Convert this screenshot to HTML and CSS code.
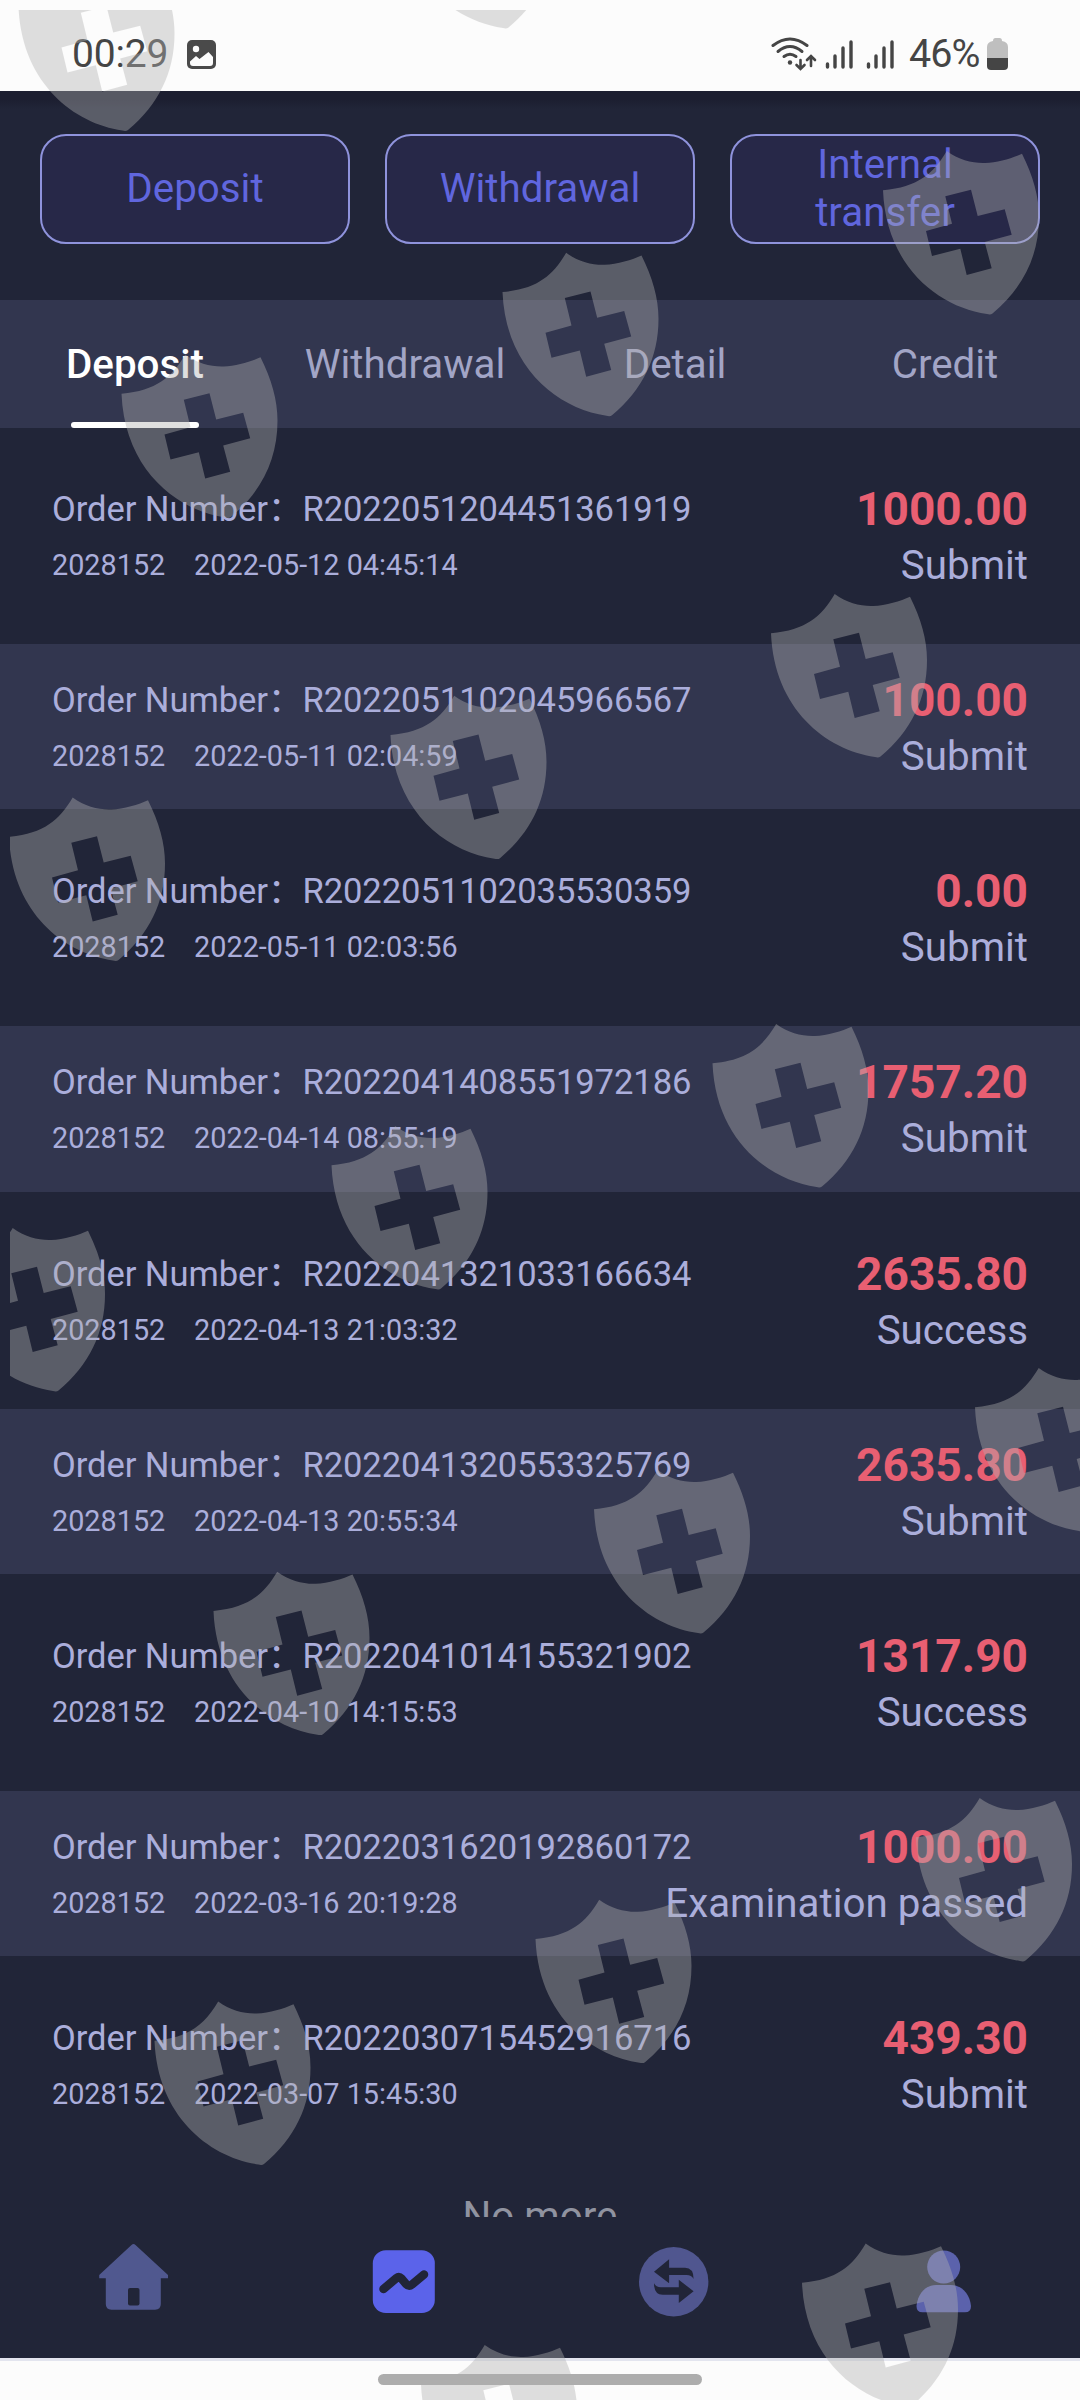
FILE: index.html
```html
<!DOCTYPE html>
<html lang="en">
<head>
    <meta charset="UTF-8">
    <meta name="viewport" content="width=device-width, initial-scale=1.0">
    <title>Deposit records</title>
    <link rel="stylesheet" href="styles.css">
</head>
<body>

<!-- Status bar -->
<div class="status-bar">
    <span class="clock">00:29</span>
    <svg class="photo-icon" viewBox="0 0 29 29">
        <rect width="29" height="29" rx="5" fill="#4a4a4a"/>
        <circle cx="9" cy="9" r="3.2" fill="#fcfcfc"/>
        <path d="M3 21.500L9 16l3.500 3L21.500 12 26 17v6q0 3-3 3H6q-3 0-3-3z" fill="#fcfcfc"/>
    </svg>
    <svg class="signal-icons" viewBox="0 0 124 34">
        <g fill="none" stroke="#454545" stroke-width="3" stroke-linecap="round">
            <path d="M2 8.500Q19 -4.500 36 8.500"/>
            <path d="M7 14.500Q19 4.500 31 14.500"/>
            <path d="M13 19.500Q19 15 25 19.500"/>
            <path d="M29.500 23v8M25.500 28l4 4 4-4M40 29v-9M36 23l4-4 4 4" stroke-width="2.600"/>
            <path d="M56.500 27v3M64 19v11M72 11v19M80 5v25M97.500 27v3M105 19v11M113 11v19M121 5v25" stroke-width="3.400"/>
        </g>
        <circle cx="19" cy="25.500" r="2.200" fill="#454545"/>
    </svg>
    <span class="battery-text">46%</span>
    <svg class="battery-icon" viewBox="0 0 21 32">
        <path d="M6 3q0-3 2.500-3h4Q15 0 15 3q6 1 6 6v11H0V9q0-5 6-6z" fill="#bfbfbf"/>
        <path d="M0 20h21v8q0 4-4 4H4q-4 0-4-4z" fill="#454545"/>
    </svg>
</div>

<!-- Action buttons -->
<div class="actions">
    <a class="action">Deposit</a>
    <a class="action">Withdrawal</a>
    <a class="action">Internal<br>transfer</a>
</div>

<!-- Tabs -->
<div class="tabs">
    <div class="tab active">Deposit</div>
    <div class="tab">Withdrawal</div>
    <div class="tab">Detail</div>
    <div class="tab">Credit</div>
</div>

<!-- Records -->
<div class="records">
    <div class="record">
        <div class="info">
            <div class="order">Order Number：R2022051204451361919</div>
            <div class="meta"><span>2028152</span><span>2022-05-12 04:45:14</span></div>
        </div>
        <div class="result">
            <div class="amount">1000.00</div>
            <div class="state">Submit</div>
        </div>
    </div>
    <div class="record">
        <div class="info">
            <div class="order">Order Number：R2022051102045966567</div>
            <div class="meta"><span>2028152</span><span>2022-05-11 02:04:59</span></div>
        </div>
        <div class="result">
            <div class="amount">100.00</div>
            <div class="state">Submit</div>
        </div>
    </div>
    <div class="record">
        <div class="info">
            <div class="order">Order Number：R2022051102035530359</div>
            <div class="meta"><span>2028152</span><span>2022-05-11 02:03:56</span></div>
        </div>
        <div class="result">
            <div class="amount">0.00</div>
            <div class="state">Submit</div>
        </div>
    </div>
    <div class="record">
        <div class="info">
            <div class="order">Order Number：R2022041408551972186</div>
            <div class="meta"><span>2028152</span><span>2022-04-14 08:55:19</span></div>
        </div>
        <div class="result">
            <div class="amount">1757.20</div>
            <div class="state">Submit</div>
        </div>
    </div>
    <div class="record">
        <div class="info">
            <div class="order">Order Number：R2022041321033166634</div>
            <div class="meta"><span>2028152</span><span>2022-04-13 21:03:32</span></div>
        </div>
        <div class="result">
            <div class="amount">2635.80</div>
            <div class="state">Success</div>
        </div>
    </div>
    <div class="record">
        <div class="info">
            <div class="order">Order Number：R2022041320553325769</div>
            <div class="meta"><span>2028152</span><span>2022-04-13 20:55:34</span></div>
        </div>
        <div class="result">
            <div class="amount">2635.80</div>
            <div class="state">Submit</div>
        </div>
    </div>
    <div class="record">
        <div class="info">
            <div class="order">Order Number：R2022041014155321902</div>
            <div class="meta"><span>2028152</span><span>2022-04-10 14:15:53</span></div>
        </div>
        <div class="result">
            <div class="amount">1317.90</div>
            <div class="state">Success</div>
        </div>
    </div>
    <div class="record">
        <div class="info">
            <div class="order">Order Number：R2022031620192860172</div>
            <div class="meta"><span>2028152</span><span>2022-03-16 20:19:28</span></div>
        </div>
        <div class="result">
            <div class="amount">1000.00</div>
            <div class="state">Examination passed</div>
        </div>
    </div>
    <div class="record">
        <div class="info">
            <div class="order">Order Number：R2022030715452916716</div>
            <div class="meta"><span>2028152</span><span>2022-03-07 15:45:30</span></div>
        </div>
        <div class="result">
            <div class="amount">439.30</div>
            <div class="state">Submit</div>
        </div>
    </div>
    <div class="no-more">No more</div>
</div>

<!-- Bottom navigation -->
<div class="nav">
    <a class="nav-item">
        <svg viewBox="0 0 80 80">
            <path d="M36.500 4q2-2 4 0L73 34v3.300h-7.200V63q0 5.700-5.700 5.700H16.500q-5.700 0-5.700-5.700V37.300H4.200V34z" fill="#50588f"/>
            <rect x="33" y="47" width="11.500" height="17.500" rx="2" fill="#212538"/>
        </svg>
    </a>
    <a class="nav-item">
        <svg viewBox="0 0 80 80">
            <rect x="7.800" y="9.300" width="62" height="62.700" rx="13" fill="#5b63ea"/>
            <path d="M18.500 48L31.500 37q2.500-2 5 .5L41 43q3 3 6 .5L59 33.500" fill="none" stroke="#212538" stroke-width="8.500" stroke-linecap="round"/>
        </svg>
    </a>
    <a class="nav-item">
        <svg viewBox="0 0 80 80">
            <circle cx="38.700" cy="40.700" r="34.700" fill="#50568f"/>
            <path d="M19 30.700L34.100 18.300v8.400H50q8.600 0 8.600 11.300-2-4-7-4H34.100v8.300z" fill="#212538"/>
            <path d="M58.600 50.300L43.800 38.700v7.600H26q-5 0-7-4 0 11.400 8.600 11.400h16.200V62z" fill="#212538"/>
        </svg>
    </a>
    <a class="nav-item">
        <svg viewBox="0 0 80 80">
            <circle cx="38.700" cy="26" r="16.500" fill="#5b62ac"/>
            <path d="M11.500 65C13 51 22 44 31 44h15c9 0 18.500 7 20 21q0 6.300-6 6.300H17.500q-6 0-6-6.300z" fill="#5b62ac"/>
        </svg>
    </a>
</div>

<!-- Home gesture bar -->
<div class="gesture"><div class="pill"></div></div>

<!-- Shield overlay -->
<svg class="shields" viewBox="10 10 1070 2390">
    <defs>
        <path id="shield" fill-rule="evenodd" d="M0 39.300C35 36 50 23 63.700 0C76 9 90 12.500 102.300 12S130 7 139 2.700C150 25 156 45 156 66C156 105 140 137 109.500 162.500Q107.500 164 104 163C55 156 3 115 0 39.300zM62.300 45.300L88 38.700 94.700 65 121.700 58.300 128.700 83.700 101.700 91 108.700 117.300 83.700 124 77.300 97.700 49 105 43 80 69 72.700z"/>
    </defs>
    <use href="#shield" x="18.500" y="-32.500"/>
    <use href="#shield" x="399" y="-135"/>
    <use href="#shield" x="883" y="151"/>
    <use href="#shield" x="502.500" y="252.800"/>
    <use href="#shield" x="121.500" y="354.500"/>
    <use href="#shield" x="771" y="594"/>
    <use href="#shield" x="390.500" y="695.700"/>
    <use href="#shield" x="9" y="797.500"/>
    <use href="#shield" x="712.500" y="1024"/>
    <use href="#shield" x="331.500" y="1126"/>
    <use href="#shield" x="-51" y="1228"/>
    <use href="#shield" x="975" y="1368"/>
    <use href="#shield" x="594" y="1470"/>
    <use href="#shield" x="213.500" y="1571.700"/>
    <use href="#shield" x="916" y="1798"/>
    <use href="#shield" x="535.500" y="1899.700"/>
    <use href="#shield" x="154.500" y="2001.500"/>
    <use href="#shield" x="802" y="2243.500"/>
    <use href="#shield" x="421" y="2345"/>
</svg>

</body>
</html>
```

FILE: styles.css
```css
* {
    box-sizing: border-box;
}
body {
    margin: 0;
    width: 1080px;
    height: 2400px;
    overflow: hidden;
    position: relative;
    display: flex;
    flex-direction: column;
    background-color: #212538;
    font-family: Roboto, "Noto Sans CJK SC", sans-serif;
    font-size: 40.32px;
    line-height: 48px;
}
svg {
    display: block;
    flex: none;
}

/* Status bar */
.status-bar {
    flex: none;
    height: 91px;
    padding: 17px 72px 0 72px;
    display: flex;
    align-items: center;
    background-color: #fcfcfc;
    color: #454545;
}
.clock {
    width: 115px;
    font-size: 39px;
    letter-spacing: -0.2px;
}
.photo-icon {
    width: 29px;
    height: 29px;
}
.signal-icons {
    width: 124px;
    height: 34px;
    margin-left: auto;
}
.battery-text {
    width: 78px;
    margin-left: 14px;
    font-size: 39.5px;
    letter-spacing: -1px;
}
.battery-icon {
    width: 21px;
    height: 32px;
}

/* Action buttons */
.actions {
    flex: none;
    height: 209px;
    padding: 43px 40px 0;
    display: flex;
    gap: 35px;
    background: linear-gradient(#1c1e30 0, #1c1e30 8px, #212538 18px);
}
.action {
    flex: 1;
    height: 110px;
    display: flex;
    align-items: center;
    justify-content: center;
    text-align: center;
    border: 2px solid #8f93dc;
    border-radius: 26px;
    background-color: #272848;
    color: #6066de;
}

/* Tabs */
.tabs {
    flex: none;
    height: 128px;
    display: flex;
    background-color: #32364f;
}
.tab {
    flex: 1;
    display: flex;
    flex-direction: column;
    align-items: center;
    padding-top: 41px;
    color: #a2a5c6;
}
.tab.active {
    color: #fff;
    font-weight: 500;
}
.tab.active::after {
    content: "";
    width: 128px;
    height: 6px;
    margin-top: auto;
    border-radius: 3px;
    background-color: #fff;
}

/* Records */
.records {
    flex: none;
    height: 1789px;
    overflow: hidden;
    color: #abaedb;
}
.record {
    height: 165.2px;
    margin-top: 25.9px;
    padding: 32px 52px 0;
    display: flex;
    justify-content: space-between;
}
.record:first-child {
    margin-top: 25.2px;
}
.record:nth-child(even) {
    background-color: #32364f;
}
.info, .result {
    min-width: 0;
    white-space: nowrap;
}
.info {
    width: 600px;
}
.order {
    font-size: 34.56px;
    letter-spacing: -0.06px;
}
.meta {
    display: flex;
    gap: 28.8px;
    margin-top: 8px;
    font-size: 28.8px;
}
.result {
    flex: none;
    text-align: right;
}
.amount {
    color: #e85f72;
    font-size: 46.08px;
    font-weight: bold;
}
.state {
    margin-top: 9px;
}
.no-more {
    margin-top: 46px;
    text-align: center;
    color: #9093a0;
}

/* Bottom navigation */
.nav {
    flex: none;
    height: 141px;
    padding-top: 24px;
    display: flex;
}
.nav-item {
    flex: 1;
    display: flex;
    justify-content: center;
}
.nav-item svg {
    width: 80px;
    height: 80px;
}
.gesture {
    flex: none;
    height: 42px;
    padding-top: 13px;
    border-top: 3px solid #e3e5ef;
    background-color: #fcfcfc;
}
.pill {
    position: relative;
    z-index: 2;
    width: 324px;
    height: 11px;
    margin: 0 auto;
    border-radius: 6px;
    background-color: #adadad;
}

/* Shields drawn over the whole screen */
.shields {
    position: absolute;
    left: 10px;
    top: 10px;
    width: 1070px;
    height: 2390px;
    overflow: hidden;
    fill: #b1b1b1;
    opacity: 0.4;
    pointer-events: none;
}
```
